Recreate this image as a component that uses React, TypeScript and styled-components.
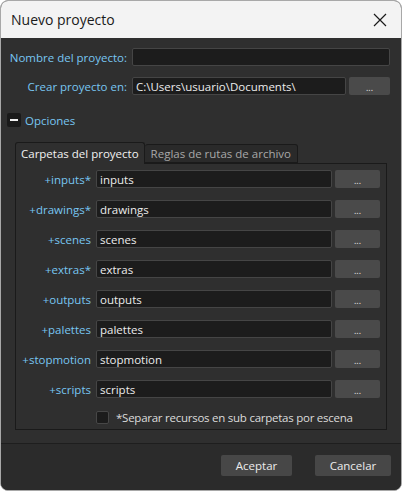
import { useState } from "react"
import styled, { createGlobalStyle } from "styled-components"

const GlobalStyle = createGlobalStyle`
  html, body {
    margin: 0;
    padding: 0;
    background: #ffffff;
  }
  * {
    box-sizing: border-box;
  }
`

const Window = styled.div`
  width: 402px;
  height: 491px;
  display: flex;
  flex-direction: column;
  border: 1px solid #a8a8a8;
  border-radius: 8px;
  overflow: hidden;
  background: #2f2f2f;
  font-family: "Open Sans", "Noto Sans", sans-serif;
  font-size: 11.5px;
`

const TitleBar = styled.div`
  height: 37px;
  flex: none;
  display: flex;
  align-items: center;
  justify-content: space-between;
  padding: 0 10px 0 10px;
  background: #f3f3f3;
  color: #1a1a1a;
  font-size: 14px;
`

const CloseButton = styled.button`
  width: 30px;
  height: 30px;
  display: flex;
  align-items: center;
  justify-content: center;
  margin-right: -4px;
  padding: 0;
  border: none;
  background: transparent;
  cursor: pointer;
`

const Body = styled.div`
  flex: 1;
  display: flex;
  flex-direction: column;
  padding: 10px 0 0;
`

const FormGrid = styled.div`
  display: grid;
  grid-template-columns: 126px 1fr;
  column-gap: 5px;
  row-gap: 11px;
  padding: 0 11px 0 0;
`

const Label = styled.label`
  display: flex;
  align-items: center;
  justify-content: flex-end;
  height: 18px;
  color: #78c6f2;
  white-space: nowrap;
`

const InputRow = styled.div`
  display: flex;
  gap: 3px;
`

const TextInput = styled.input`
  flex: 1;
  min-width: 0;
  height: 18px;
  padding: 0 3px;
  border: 1px solid #454545;
  border-radius: 2px;
  background: #1c1c1c;
  color: #ececec;
  font-family: inherit;
  font-size: inherit;
  outline: none;
`

const BrowseButton = styled.button<{ $width: number }>`
  flex: none;
  width: ${({ $width }) => $width}px;
  height: 18px;
  padding: 0 0 3px;
  border: none;
  border-radius: 2px;
  background: #4a4a4a;
  color: #e8e8e8;
  font-family: inherit;
  font-size: 9px;
  line-height: 1;
  display: flex;
  align-items: flex-end;
  justify-content: center;
  cursor: pointer;
`

const Toggle = styled.button`
  display: flex;
  align-items: center;
  gap: 4px;
  height: 16px;
  margin: 17px 0 0 6px;
  padding: 0;
  border: none;
  background: transparent;
  color: #78c6f2;
  font-family: inherit;
  font-size: inherit;
  cursor: pointer;
`

const ToggleBox = styled.span`
  width: 14px;
  height: 14px;
  display: flex;
  align-items: center;
  justify-content: center;
  border-radius: 2px;
  background: #1a1a1a;

  &::before {
    content: "";
    width: 8px;
    height: 1.5px;
    background: #f0f0f0;
  }
`

const TabArea = styled.div`
  display: flex;
  flex-direction: column;
  margin: 14px 14px 0 14px;
`

const TabBar = styled.div`
  display: flex;
  align-items: flex-end;
  height: 21px;
`

const Tab = styled.button<{ $active?: boolean }>`
  height: ${({ $active }) => ($active ? "22px" : "19px")};
  margin-bottom: ${({ $active }) => ($active ? "-1px" : "0")};
  padding: 0 ${({ $active }) => ($active ? "5px" : "6px")};
  border: 1px solid #1a1a1a;
  border-bottom: ${({ $active }) => ($active ? "none" : "1px solid #1a1a1a")};
  border-left: ${({ $active }) => ($active ? "1px solid #1a1a1a" : "none")};
  border-radius: 3px 3px 0 0;
  background: ${({ $active }) => ($active ? "#2f2f2f" : "#2a2a2a")};
  color: ${({ $active }) => ($active ? "#f2f2f2" : "#a8a8a8")};
  font-family: inherit;
  font-size: inherit;
  white-space: nowrap;
  position: relative;
  z-index: ${({ $active }) => ($active ? 1 : 0)};
  cursor: pointer;
`

const Panel = styled.div`
  height: 267px;
  display: flex;
  flex-direction: column;
  padding: 6px 6px 0 0;
  border: 1px solid #1a1a1a;
`

const FolderGrid = styled.div`
  display: grid;
  grid-template-columns: 75px 1fr;
  column-gap: 5px;
  row-gap: 12px;
`

const CheckRow = styled.label`
  display: flex;
  align-items: center;
  gap: 7px;
  height: 14px;
  margin: 12px 0 0 80px;
  color: #dcdcdc;
  letter-spacing: -0.25px;
  cursor: pointer;
`

const CheckBox = styled.span`
  width: 13px;
  height: 13px;
  border: 1px solid #474747;
  border-radius: 2px;
  background: #1c1c1c;
`

const Footer = styled.div`
  margin-top: 13px;
  flex: 1;
  display: flex;
  justify-content: flex-end;
  align-items: flex-start;
  gap: 23px;
  padding: 11px 10px 0 0;
  border-top: 1px solid #1e1e1e;
  background: #2b2b2b;
`

const DialogButton = styled.button<{ $width: number }>`
  width: ${({ $width }) => $width}px;
  height: 21px;
  padding: 0;
  border: none;
  border-radius: 2px;
  background: #474747;
  color: #ececec;
  font-family: inherit;
  font-size: inherit;
  cursor: pointer;
`

const folders = [
  { name: "inputs", star: true },
  { name: "drawings", star: true },
  { name: "scenes", star: false },
  { name: "extras", star: true },
  { name: "outputs", star: false },
  { name: "palettes", star: false },
  { name: "stopmotion", star: false },
  { name: "scripts", star: false },
]

function FolderRow({ name, star }: { name: string; star: boolean }): JSX.Element {
  return (
    <>
      <Label>
        +{name}
        {star ? "*" : ""}
      </Label>
      <InputRow>
        <TextInput defaultValue={name} />
        <BrowseButton type="button" $width={45}>...</BrowseButton>
      </InputRow>
    </>
  )
}

export default function App(): JSX.Element {
  const [open, setOpen] = useState(true)

  return (
    <>
      <GlobalStyle />
      <Window>
        <TitleBar>
          <span>Nuevo proyecto</span>
          <CloseButton type="button" aria-label="Cerrar">
            <svg width="14" height="14" viewBox="0 0 14 14">
              <path d="M1 1L13 13M13 1L1 13" stroke="#1a1a1a" strokeWidth="1.2" fill="none" />
            </svg>
          </CloseButton>
        </TitleBar>
        <Body>
          <FormGrid>
            <Label>Nombre del proyecto:</Label>
            <InputRow>
              <TextInput defaultValue="" />
            </InputRow>
            <Label>Crear proyecto en:</Label>
            <InputRow>
              <TextInput defaultValue={"C:\\Users\\usuario\\Documents\\"} />
              <BrowseButton type="button" $width={41}>...</BrowseButton>
            </InputRow>
          </FormGrid>

          <Toggle type="button" onClick={() => setOpen(!open)}>
            <ToggleBox />
            Opciones
          </Toggle>

          <TabArea>
            <TabBar>
              <Tab $active type="button">Carpetas del proyecto</Tab>
              <Tab type="button">Reglas de rutas de archivo</Tab>
            </TabBar>
            <Panel>
              <FolderGrid>
                {folders.map((f) => (
                  <FolderRow key={f.name} name={f.name} star={f.star} />
                ))}
              </FolderGrid>
              <CheckRow>
                <CheckBox />
                *Separar recursos en sub carpetas por escena
              </CheckRow>
            </Panel>
          </TabArea>

          <Footer>
            <DialogButton type="button" $width={71}>Aceptar</DialogButton>
            <DialogButton type="button" $width={76}>Cancelar</DialogButton>
          </Footer>
        </Body>
      </Window>
    </>
  )
}
